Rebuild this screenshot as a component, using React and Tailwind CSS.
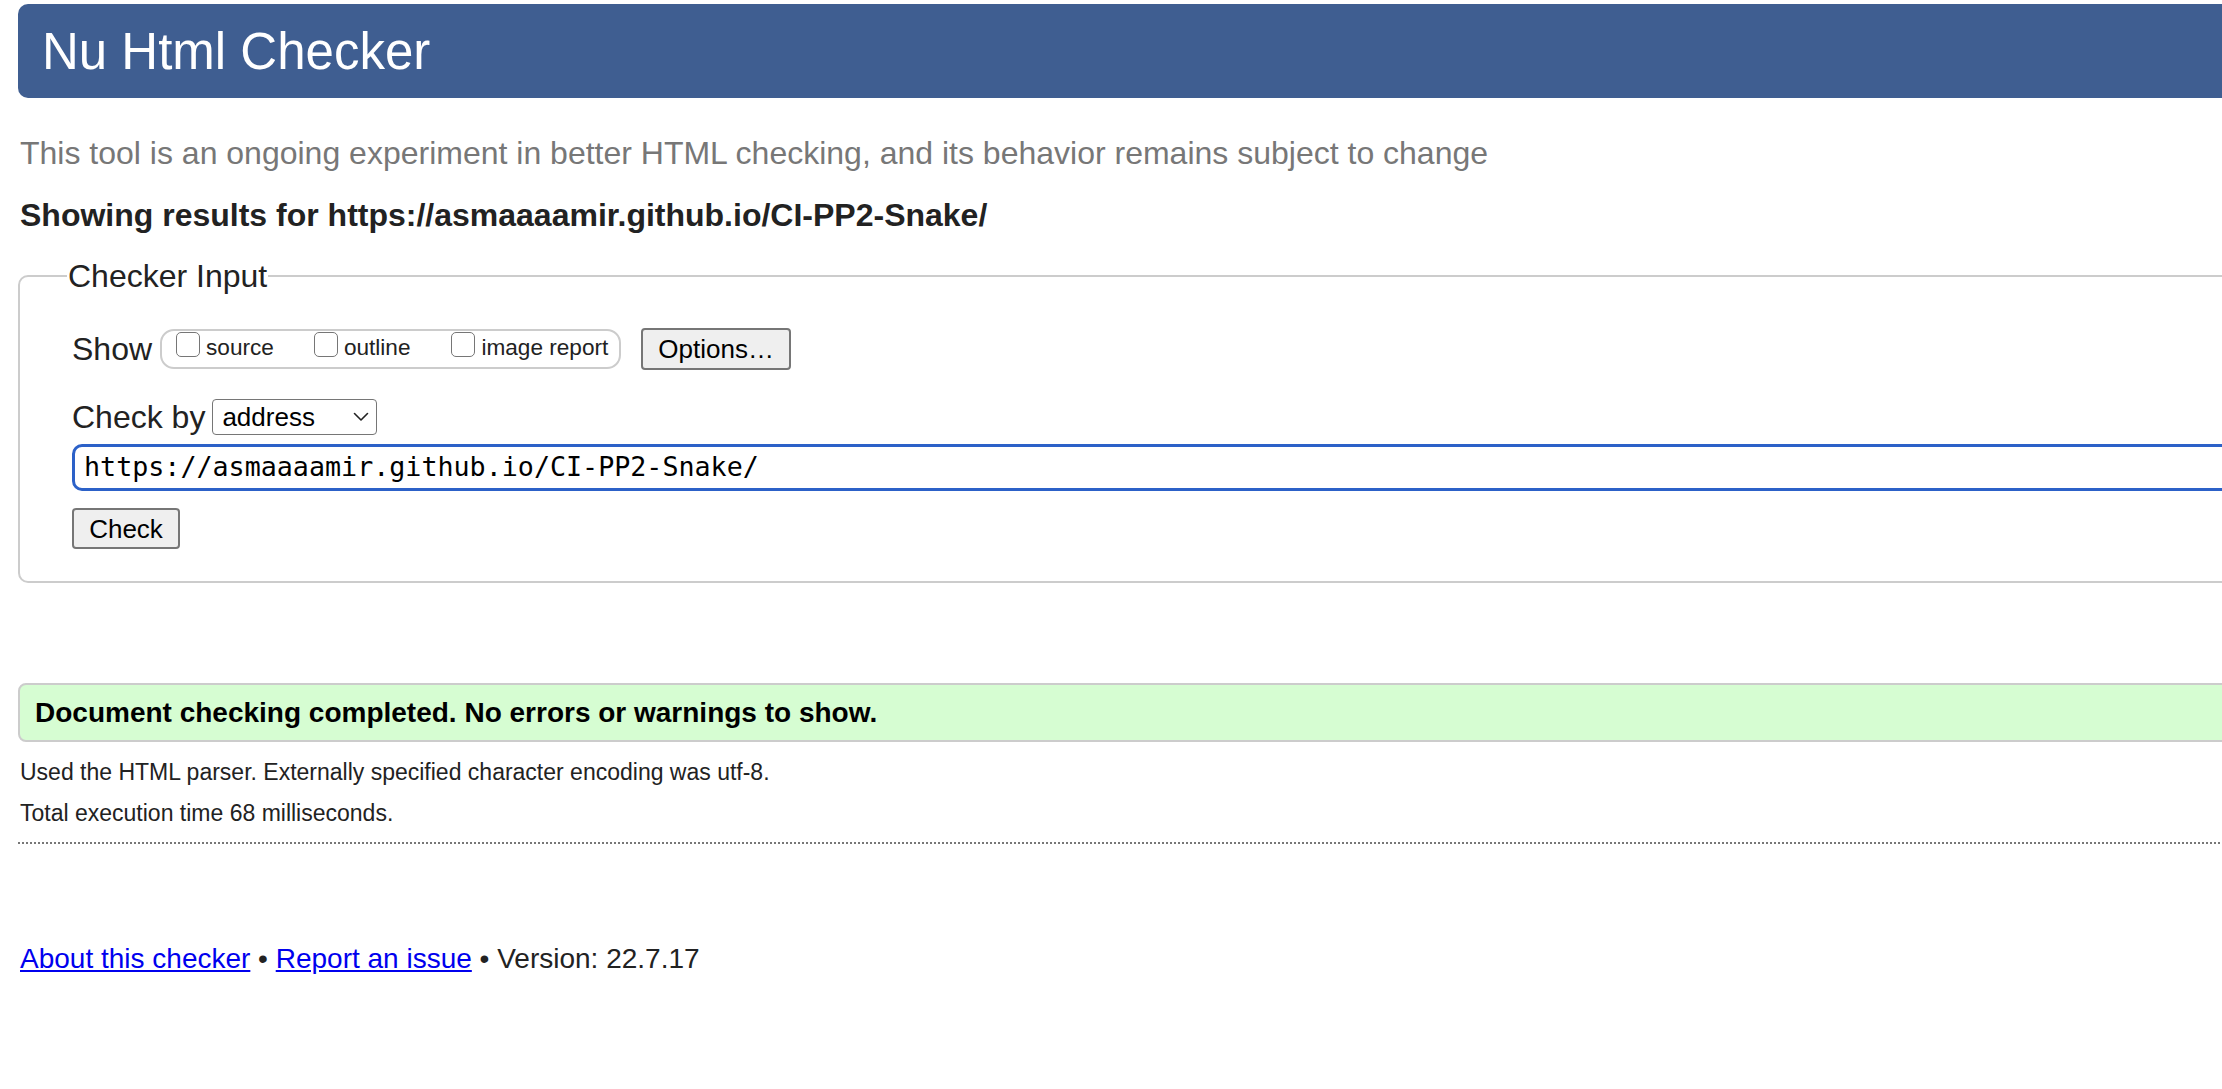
import React from "react";

function Box({ label, gapLeft }) {
  return (
    <label className={`flex items-start ${gapLeft}`}>
      <input
        type="checkbox"
        className="appearance-none w-[24px] h-[25px] border-[1.5px] border-[#767676] rounded-[5px] bg-white m-0 shrink-0"
      />
      <span className="ml-[6px] mt-[3px] text-[22.6px] leading-[26px] text-[#222]">{label}</span>
    </label>
  );
}

export default function App() {
  return (
    <div className="w-[2222px] h-[1089px] overflow-hidden bg-white text-[#222] font-['Liberation_Sans',Arial,Helvetica,sans-serif]">
      <div className="w-[2500px] pl-[18px] pt-[4px]">
        <header className="h-[94px] rounded-[10px] bg-[#3f5e91] flex items-center pl-[24px]">
          <h1 className="text-[51px] leading-none text-white font-normal">Nu Html Checker</h1>
        </header>

        <p className="mt-[35px] pl-[2px] text-[32px] leading-[40px] text-[#777]">
          This tool is an ongoing experiment in better HTML checking, and its behavior remains subject to change
        </p>

        <p className="mt-[22px] pl-[2px] text-[32px] leading-[40px] font-bold text-[#222]">
          Showing results for https://asmaaaamir.github.io/CI-PP2-Snake/
        </p>

        <fieldset className="mt-[21px] border-2 border-[#cccccc] rounded-[10px] p-0 m-0">
          <legend className="ml-[47px] px-[1px] text-[32px] leading-[40px] text-[#222]">Checker Input</legend>
          <div className="pl-[52px] pb-[32px]">
            <div className="mt-[32px] flex items-center h-[42px]">
              <span className="text-[32px] leading-[40px]">Show</span>
              <div className="ml-[8px] h-[40px] border-2 border-[#cccccc] rounded-[14px] flex items-start pt-[1px] pl-[14px] pr-[11px]">
                <Box label="source" gapLeft="" />
                <Box label="outline" gapLeft="ml-[40px]" />
                <Box label="image report" gapLeft="ml-[41px]" />
              </div>
              <button className="ml-[20px] h-[42px] px-[15px] bg-[#efefef] border-2 border-[#767676] rounded-[4px] text-[26px] leading-none text-black">
                Options…
              </button>
            </div>

            <div className="mt-[27px] flex items-center">
              <span className="text-[32px] leading-[40px]">Check by</span>
              <div className="ml-[7px] w-[165px] h-[36px] border-[1.5px] border-[#767676] rounded-[4px] bg-white flex items-center justify-between pl-[9px] pr-[7px]">
                <span className="text-[26px] leading-none text-black">address</span>
                <svg width="16" height="10" viewBox="0 0 16 10" fill="none">
                  <path d="M1.5 1.5 L8 8 L14.5 1.5" stroke="#222" strokeWidth="1.6" strokeLinecap="round" strokeLinejoin="round" />
                </svg>
              </div>
            </div>

            <div className="mt-[7px] h-[47px] border-[3px] border-[#2c61c8] rounded-[10px] flex items-center pl-[9px]">
              <span className="text-[26.7px] leading-none text-black font-['DejaVu_Sans_Mono','Liberation_Mono',monospace]">
                https://asmaaaamir.github.io/CI-PP2-Snake/
              </span>
            </div>

            <button className="mt-[17px] h-[41px] w-[108px] bg-[#efefef] border-2 border-[#767676] rounded-[4px] text-[26px] leading-none text-black">
              Check
            </button>
          </div>
        </fieldset>

        <div className="mt-[100px] h-[59px] border-2 border-[#cccccc] rounded-[8px] bg-[#d6fdd2] flex items-center pl-[15px]">
          <span className="text-[28px] leading-none font-bold text-black">
            Document checking completed. No errors or warnings to show.
          </span>
        </div>

        <p className="mt-[15px] pl-[2px] text-[23px] leading-[30px]">
          Used the HTML parser. Externally specified character encoding was utf-8.
        </p>
        <p className="mt-[11px] pl-[2px] text-[23px] leading-[30px]">Total execution time 68 milliseconds.</p>

        <div className="mt-[14px] border-t-2 border-dotted border-[#777]"></div>

        <p className="mt-[98px] pl-[2px] text-[28px] leading-[34px]">
          <a href="#" className="text-[#0000ee] underline">About this checker</a>
          {" • "}
          <a href="#" className="text-[#0000ee] underline">Report an issue</a>
          {" • Version: 22.7.17"}
        </p>
      </div>
    </div>
  );
}
